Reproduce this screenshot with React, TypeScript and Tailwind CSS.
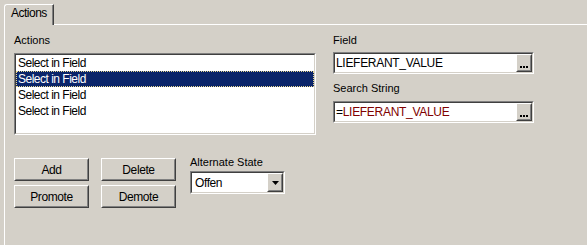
import React from 'react';

const Sunken = ({ className = '', children }: { className?: string; children?: React.ReactNode }) => (
  <div className={`border border-t-[#808080] border-l-[#808080] border-b-white border-r-white ${className}`}>
    <div className="h-full w-full border border-t-[#404040] border-l-[#404040] border-b-[#d4d0c8] border-r-[#d4d0c8] bg-white">
      {children}
    </div>
  </div>
);

const Raised = ({ className = '', children }: { className?: string; children?: React.ReactNode }) => (
  <div className={`border border-t-white border-l-white border-b-[#404040] border-r-[#404040] bg-[#d4d0c8] ${className}`}>
    <div className="h-full w-full border border-t-[#d4d0c8] border-l-[#d4d0c8] border-b-[#808080] border-r-[#808080] flex items-center justify-center">
      {children}
    </div>
  </div>
);

const EllipsisButton = () => (
  <Raised className="w-[16px] h-full shrink-0">
    <div className="flex gap-[1px] self-end mb-[2px]">
      <span className="w-[2px] h-[2px] bg-black" />
      <span className="w-[2px] h-[2px] bg-black" />
      <span className="w-[2px] h-[2px] bg-black" />
    </div>
  </Raised>
);

const TextField = ({ children }: { children: React.ReactNode }) => (
  <Sunken className="w-[201px] h-[22px]">
    <div className="flex h-full items-center">
      <div className="flex-1 pl-[1px] leading-[14px] text-[12px] tracking-[-0.3px]">{children}</div>
      <EllipsisButton />
    </div>
  </Sunken>
);

const rows = ['Select in Field', 'Select in Field', 'Select in Field', 'Select in Field'];

export default function App() {
  return (
    <div className="w-[587px] h-[245px] overflow-hidden bg-[#d4d0c8] pt-[4px] pl-[4px] text-[11px] text-black font-['Liberation_Sans',Arial,sans-serif]">
      {/* tab strip */}
      <div className="flex items-end h-[21px]">
        <div className="w-[50px] h-[21px] border-t border-l border-white rounded-tl-[3px] border-r border-r-[#404040] shadow-[inset_-1px_0_0_#808080] pl-[6px] pt-[2px] leading-[13px] text-[12px] tracking-[-0.5px]">
          Actions
        </div>
        <div className="flex-1 h-[21px] border-b border-white" />
      </div>

      {/* panel */}
      <div className="h-full border-l border-white pl-[9px] pt-[9px] flex">
        <div className="w-[302px] flex flex-col">
          <div className="h-[13px] leading-[13px] mb-[6px]">Actions</div>
          <Sunken className="w-[302px] h-[82px]">
            <div className="text-[12px] tracking-[-0.5px]">
              {rows.map((r, i) => (
                <div
                  key={i}
                  className={
                    i === 1
                      ? 'h-[16px] leading-[14px] pl-[1px] bg-[#0a246a] text-white border border-dotted border-[#e8d890]'
                      : 'h-[16px] leading-[16px] pl-[2px]'
                  }
                >
                  {r}
                </div>
              ))}
            </div>
          </Sunken>

          <div className="flex mt-[23px] text-[12px] tracking-[-0.4px]">
            <div className="flex flex-col gap-[4px]">
              <Raised className="w-[75px] h-[23px]">Add</Raised>
              <Raised className="w-[75px] h-[23px]">Promote</Raised>
            </div>
            <div className="flex flex-col gap-[4px] ml-[12px]">
              <Raised className="w-[75px] h-[23px]">Delete</Raised>
              <Raised className="w-[75px] h-[23px]">Demote</Raised>
            </div>
            <div className="flex flex-col ml-[14px] -mt-[2px]">
              <div className="h-[13px] leading-[13px] mb-[2px] text-[11px] tracking-normal">Alternate State</div>
              <Sunken className="w-[95px] h-[23px]">
                <div className="flex h-full items-center">
                  <div className="flex-1 pl-[3px] leading-[14px]">Offen</div>
                  <Raised className="w-[16px] h-full shrink-0">
                    <svg width="7" height="4" viewBox="0 0 7 4">
                      <polygon points="0,0 7,0 3.5,4" fill="#000" />
                    </svg>
                  </Raised>
                </div>
              </Sunken>
            </div>
          </div>
        </div>

        <div className="ml-[17px] w-[201px] flex flex-col">
          <div className="h-[13px] leading-[13px] mb-[5px]">Field</div>
          <TextField>LIEFERANT_VALUE</TextField>
          <div className="h-[13px] leading-[13px] mt-[8px] mb-[6px]">Search String</div>
          <TextField>
            <span>=</span>
            <span className="text-[#800000]">LIEFERANT_VALUE</span>
          </TextField>
        </div>
      </div>
    </div>
  );
}
